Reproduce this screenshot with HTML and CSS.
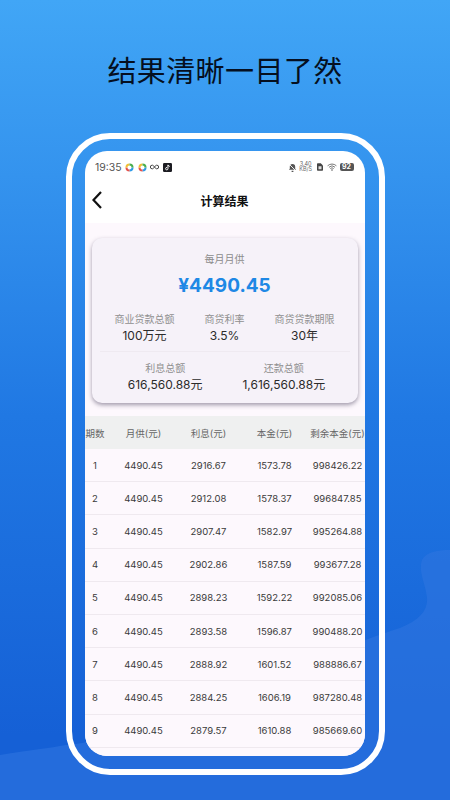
FILE: index.html
```html
<!DOCTYPE html>
<html lang="zh">
<head>
<meta charset="utf-8">
<title>结果清晰一目了然</title>
<link rel="stylesheet" href="styles.css">
</head>
<body>
<main class="poster">
  <svg class="wave" viewBox="0 0 450 800" preserveAspectRatio="none" aria-hidden="true">
    <path d="M0 755 C30 750 50 748 66 745 C140 740 300 660 400 628 C420 620 428 610 427 598 C426 585 418 572 422 560 C426 552 438 550 450 550 L450 800 L0 800 Z" fill="#2f75e0" fill-opacity="0.6"/>
  </svg>
  <h1 class="headline">结果清晰一目了然</h1>
  <div class="frame">
    <div class="screen">
      <div class="status">
        <div class="status-left">
          <span class="time">19:35</span>
          <svg class="ring" viewBox="0 0 10 10"><circle class="seg-blue" cx="5" cy="5" r="3.4" pathLength="4"/><circle class="seg-red" cx="5" cy="5" r="3.4" pathLength="4"/><circle class="seg-yellow" cx="5" cy="5" r="3.4" pathLength="4"/><circle class="seg-green" cx="5" cy="5" r="3.4" pathLength="4"/></svg>
          <svg class="ring" viewBox="0 0 10 10"><circle class="seg-blue" cx="5" cy="5" r="3.4" pathLength="4"/><circle class="seg-red" cx="5" cy="5" r="3.4" pathLength="4"/><circle class="seg-yellow" cx="5" cy="5" r="3.4" pathLength="4"/><circle class="seg-green" cx="5" cy="5" r="3.4" pathLength="4"/></svg>
          <svg class="loop" viewBox="0 0 10 6"><path d="M5 3C4 1.4 3.2 1 2.4 1a2 2 0 0 0 0 4C3.2 5 4 4.600 5 3C6 1.400 6.800 1 7.600 1a2 2 0 0 1 0 4C6.800 5 6 4.600 5 3Z" fill="none" stroke="#444" stroke-width="1.100"/></svg>
          <svg class="tiktok" viewBox="0 0 10 10"><rect width="10" height="10" rx="1.500" fill="#1c1c22"/><path d="M5.500 2v4.300a1.300 1.300 0 1 1-1.100-1.300M5.500 2.200c.3 1 1 1.500 2 1.600" fill="none" stroke="#fff" stroke-width="1.100"/></svg>
        </div>
        <div class="status-right">
          <svg class="mute" viewBox="0 0 10 10"><path d="M5 1a3 3 0 0 1 3 3v2.500l1 1H1l1-1V4a3 3 0 0 1 3-3ZM4 8.500h2V10H4Z" fill="#555"/><path d="M1 1l8 8" stroke="#fff" stroke-width="1"/></svg>
          <span class="speed">3.40<br>KB/S</span>
          <svg class="sim" viewBox="0 0 8 10"><path d="M1 0h4l3 3v6a1 1 0 0 1-1 1H1a1 1 0 0 1-1-1V1a1 1 0 0 1 1-1Z" fill="#444"/><rect x="2" y="4" width="4" height="4" fill="#ddd"/></svg>
          <svg class="wifi" viewBox="0 0 12 10"><path d="M.5 3.500a8 8 0 0 1 11 0M2.200 5.300a5.500 5.500 0 0 1 7.600 0M3.900 7a3 3 0 0 1 4.200 0" fill="none" stroke="#555" stroke-width="1"/><circle cx="6" cy="8.800" r="1" fill="#555"/></svg>
          <span class="battery">92</span>
        </div>
      </div>
      <header class="nav">
        <svg class="back" viewBox="0 0 12 20"><path d="M10 2 2.500 10 10 18" fill="none" stroke="#111" stroke-width="2.200"/></svg>
        <h2 class="nav-title">计算结果</h2>
      </header>
      <div class="body">
        <section class="card">
          <p class="card-label">每月月供</p>
          <p class="amount">¥4490.45</p>
          <div class="stats stats-three">
            <div class="stat"><span class="stat-label">商业贷款总额</span><span class="stat-value">100万元</span></div>
            <div class="stat"><span class="stat-label">商贷利率</span><span class="stat-value">3.5%</span></div>
            <div class="stat"><span class="stat-label">商贷贷款期限</span><span class="stat-value">30年</span></div>
          </div>
          <div class="stats stats-two">
            <div class="stat"><span class="stat-label">利息总额</span><span class="stat-value">616,560.88元</span></div>
            <div class="stat"><span class="stat-label">还款总额</span><span class="stat-value">1,616,560.88元</span></div>
          </div>
        </section>
        <div class="table">
          <div class="row head"><span>期数</span><span>月供(元)</span><span>利息(元)</span><span>本金(元)</span><span>剩余本金(元)</span></div>
          <div class="row"><span>1</span><span>4490.45</span><span>2916.67</span><span>1573.78</span><span>998426.22</span></div>
          <div class="row"><span>2</span><span>4490.45</span><span>2912.08</span><span>1578.37</span><span>996847.85</span></div>
          <div class="row"><span>3</span><span>4490.45</span><span>2907.47</span><span>1582.97</span><span>995264.88</span></div>
          <div class="row"><span>4</span><span>4490.45</span><span>2902.86</span><span>1587.59</span><span>993677.28</span></div>
          <div class="row"><span>5</span><span>4490.45</span><span>2898.23</span><span>1592.22</span><span>992085.06</span></div>
          <div class="row"><span>6</span><span>4490.45</span><span>2893.58</span><span>1596.87</span><span>990488.20</span></div>
          <div class="row"><span>7</span><span>4490.45</span><span>2888.92</span><span>1601.52</span><span>988886.67</span></div>
          <div class="row"><span>8</span><span>4490.45</span><span>2884.25</span><span>1606.19</span><span>987280.48</span></div>
          <div class="row"><span>9</span><span>4490.45</span><span>2879.57</span><span>1610.88</span><span>985669.60</span></div>
        </div>
      </div>
    </div>
  </div>
</main>
</body>
</html>
```

FILE: styles.css
```css
* { box-sizing: border-box; margin: 0; padding: 0; }
html, body { width: 450px; height: 800px; overflow: hidden; }
body { font-family: Inter, "Noto Sans CJK SC", sans-serif; }
.poster {
  position: relative;
  width: 450px;
  height: 800px;
  padding-top: 133px;
  overflow: hidden;
  background: linear-gradient(180deg, #41a6f6 0%, #3493ee 22%, #2078e3 52%, #1560d6 92%, #1560d6 100%);
}
.wave { position: absolute; inset: 0; width: 450px; height: 800px; }
.headline {
  position: absolute;
  top: 48px;
  left: 0;
  width: 450px;
  text-align: center;
  font-size: 29px;
  line-height: 42px;
  font-weight: 400;
  letter-spacing: 0.4px;
  color: #050f20;
  font-family: "Noto Sans CJK SC", sans-serif;
}
.frame {
  position: relative;
  width: 319px;
  height: 642px;
  margin-left: 66px;
  padding: 12px 13px 12px 12.500px;
  border: 6.500px solid #fff;
  border-radius: 44px;
}
.screen {
  width: 280px;
  height: 605px;
  border-radius: 22px;
  overflow: hidden;
  background: #fff;
  display: flex;
  flex-direction: column;
}
.status {
  height: 32px;
  flex: none;
  padding: 0 11px 0 10.500px;
  display: flex;
  justify-content: space-between;
  align-items: center;
}
.status-left, .status-right { display: flex; align-items: center; }
.status-left { gap: 3.500px; }
.status-right { gap: 2.500px; }
.time { font-size: 10.500px; color: #555; }
.ring { width: 9px; height: 9px; }
.ring circle { fill: none; stroke-width: 2.200; stroke-dasharray: 1 3; }
.seg-blue { stroke: #2f9be8; }
.seg-red { stroke: #e5534b; stroke-dashoffset: -1; }
.seg-yellow { stroke: #f2c037; stroke-dashoffset: -2; }
.seg-green { stroke: #4caf50; stroke-dashoffset: -3; }
.loop { width: 9px; height: 6px; }
.tiktok { width: 9px; height: 9px; }
.mute { width: 9px; height: 9px; }
.speed { font-size: 5.500px; line-height: 5px; color: #666; text-align: center; }
.sim { width: 6px; height: 8px; margin: 0 2px; }
.wifi { width: 10px; height: 8px; }
.battery {
  width: 14px;
  height: 8px;
  border-radius: 2px;
  background: #555;
  color: #fff;
  font-size: 7px;
  line-height: 8px;
  font-weight: 700;
  text-align: center;
}
.nav {
  height: 40px;
  flex: none;
  position: relative;
  display: flex;
  align-items: center;
  justify-content: center;
  padding-bottom: 6px;
}
.back { position: absolute; left: 6px; top: 7px; width: 12px; height: 20px; }
.nav-title { font-size: 12px; font-weight: 700; color: #111; font-family: "Noto Sans CJK SC", sans-serif; }
.body { flex: 1; background: #fdf8fd; padding-top: 15px; }
.card {
  width: 266px;
  height: 165px;
  margin-left: 7px;
  padding-top: 13px;
  background: #f6f2f9;
  border-radius: 10px;
  box-shadow: 0 2px 4px rgba(70, 60, 90, 0.5);
  text-align: center;
}
.card-label { font-size: 10px; line-height: 16px; color: #8b8b8b; }
.amount { font-size: 19px; line-height: 28px; margin-top: 5px; font-weight: 700; color: #1e88e5; }
.stats { display: flex; justify-content: center; }
.stats-three { margin: 11px 8px 0; padding-bottom: 7px; border-bottom: 1px solid #efeaf1; gap: 30px; }
.stats-two { margin-top: 8px; padding-left: 4px; gap: 40px; }
.stat { display: flex; flex-direction: column; align-items: center; }
.stat-label { font-size: 10px; line-height: 16px; color: #8f8f8f; }
.stat-value { font-size: 12px; line-height: 17px; color: #2b2b2b; }
.table { margin-top: 13px; }
.row {
  display: grid;
  grid-template-columns: 21px 76px 54px 78px 48px;
  justify-items: center;
  align-items: center;
  height: 33.200px;
  font-size: 9.500px;
  color: #3a3a3a;
  border-bottom: 1px solid #efe9ef;
  white-space: nowrap;
}
.head { height: 33px; background: #eff0f0; color: #666; border-bottom: 0; }
```
